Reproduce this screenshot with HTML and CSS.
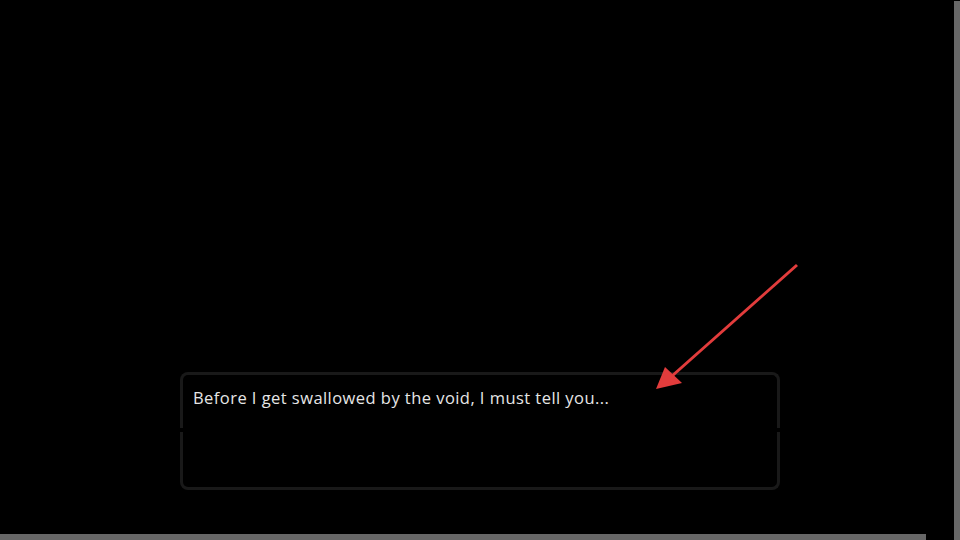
FILE: index.html
```html
<!DOCTYPE html>
<html lang="en">
<head>
    <meta charset="UTF-8">
    <meta name="viewport" content="width=device-width, initial-scale=1.0">
    <title>The Void</title>
    <link rel="stylesheet" href="styles.css">
</head>
<body>

    <div class="stage">
        <div class="dialog">
            <div class="dialog-top">
                <p class="line">Before I get swallowed by the void, I must tell you...</p>
            </div>
            <div class="dialog-bottom"></div>
        </div>
    </div>

    <!-- pointer arrow -->
    <svg class="arrow" width="960" height="540" viewBox="0 0 960 540">
        <line x1="797" y1="265" x2="672" y2="376" stroke="#e23c3c" stroke-width="3" />
        <polygon points="656,389 665,367 682,383" fill="#e23c3c" />
    </svg>

    <div class="scroll-v"></div>
    <div class="scroll-h"></div>

</body>
</html>
```

FILE: styles.css
```css
body {
    font-family: 'Open Sans', sans-serif;
    margin: 0;
    padding: 0;
    height: 100vh;
    background: #000;
    overflow: hidden;
}

.stage {
    height: 100vh;
    display: flex;
    flex-direction: column;
    justify-content: flex-end;
    align-items: center;
    padding-bottom: 50px;
    box-sizing: border-box;
}

.dialog {
    width: 600px;
    display: flex;
    flex-direction: column;
    gap: 4px;
}

.dialog-top,
.dialog-bottom {
    border: 3px solid #191919;
    box-sizing: border-box;
}

.dialog-top {
    height: 56px;
    border-bottom: none;
    border-radius: 8px 8px 0 0;
    padding: 13px 10px 0;
}

.dialog-bottom {
    height: 58px;
    border-top: none;
    border-radius: 0 0 8px 8px;
}

.line {
    margin: 0;
    color: #e6e6e6;
    font-size: 16.5px;
    letter-spacing: 0.45px;
    line-height: 20px;
}

.arrow {
    position: fixed;
    top: 0;
    left: 0;
    pointer-events: none;
}

.scroll-v {
    position: fixed;
    top: 1px;
    right: 0;
    width: 6px;
    height: 539px;
    background: #676767;
}

.scroll-h {
    position: fixed;
    left: 0;
    bottom: 0;
    width: 926px;
    height: 6px;
    background: #676767;
}
```
